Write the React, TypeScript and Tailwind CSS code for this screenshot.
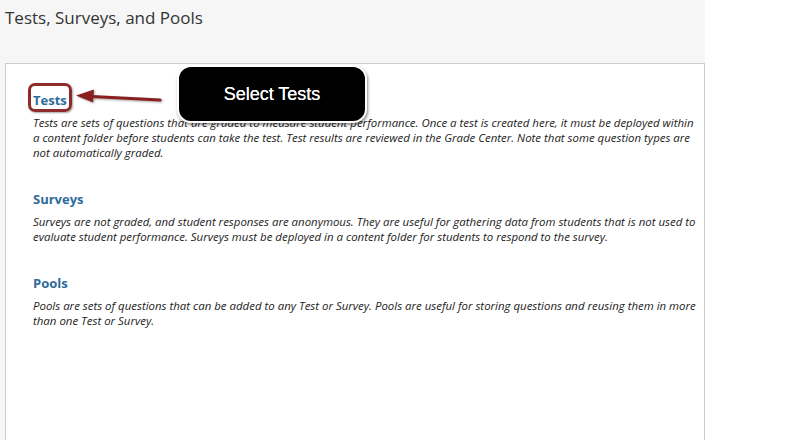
import React from 'react';

interface Section {
  title: string;
  lines: string[];
}

const sections: Section[] = [
  {
    title: 'Tests',
    lines: [
      'Tests are sets of questions that are graded to measure student performance. Once a test is created here, it must be deployed within',
      'a content folder before students can take the test. Test results are reviewed in the Grade Center. Note that some question types are',
      'not automatically graded.',
    ],
  },
  {
    title: 'Surveys',
    lines: [
      'Surveys are not graded, and student responses are anonymous. They are useful for gathering data from students that is not used to',
      'evaluate student performance. Surveys must be deployed in a content folder for students to respond to the survey.',
    ],
  },
  {
    title: 'Pools',
    lines: [
      'Pools are sets of questions that can be added to any Test or Survey. Pools are useful for storing questions and reusing them in more',
      'than one Test or Survey.',
    ],
  },
];

function Arrow() {
  return (
    <svg
      className="absolute left-[72px] top-[86px] drop-shadow-[1px_1px_1px_rgba(0,0,0,0.35)]"
      width="94"
      height="22"
      viewBox="0 0 94 22"
    >
      <path d="M88 14 L20 10.5" stroke="#8a1f1f" strokeWidth="3.2" strokeLinecap="round" fill="none" />
      <path d="M4 9.5 L22 3.5 L21 16.5 Z" fill="#8a1f1f" />
    </svg>
  );
}

export default function App() {
  return (
    <div className="w-[797px] h-[440px] overflow-hidden bg-white" style={{ fontFamily: '"Open Sans", sans-serif' }}>
      <div className="relative w-[705px] h-full bg-[#f6f6f6]">
        <div className="h-[63px] pl-[5px] pt-[6px]">
          <h1 className="text-[17px] leading-[23px] text-[#333]">Tests, Surveys, and Pools</h1>
        </div>
        <div className="ml-[5px] h-[420px] border border-[#cdcdcd] bg-white pl-[27px] pr-[4px] pt-[26px]">
          <div className="flex flex-col gap-[29px]">
            {sections.map((s) => (
              <div key={s.title}>
                <div className="relative w-fit">
                  <h2 className="text-[13px] leading-[20px] font-bold text-[#2e6b99]">{s.title}</h2>
                  {s.title === 'Tests' && (
                    <div className="absolute left-[-5px] top-[-7px] w-[44px] h-[29px] rounded-[7px] border-[3px] border-[#8e2b2b] shadow-[1px_1px_2px_rgba(0,0,0,0.35)]" />
                  )}
                </div>
                <div className="mt-[5px] flex flex-col text-[11.45px] leading-[15px] italic text-[#222] whitespace-nowrap">
                  {s.lines.map((l) => (
                    <span key={l}>{l}</span>
                  ))}
                </div>
              </div>
            ))}
          </div>
        </div>
        <Arrow />
        <div className="absolute left-[177px] top-[65px] w-[190px] h-[58px] rounded-[14px] border-2 border-white bg-black shadow-[1px_2px_3px_rgba(0,0,0,0.45)] flex items-center justify-center">
          <span className="text-[18px] text-white [text-shadow:0_0_0.4px_#fff]" style={{ fontFamily: '"Liberation Sans", Arial, sans-serif' }}>
            Select Tests
          </span>
        </div>
      </div>
    </div>
  );
}
